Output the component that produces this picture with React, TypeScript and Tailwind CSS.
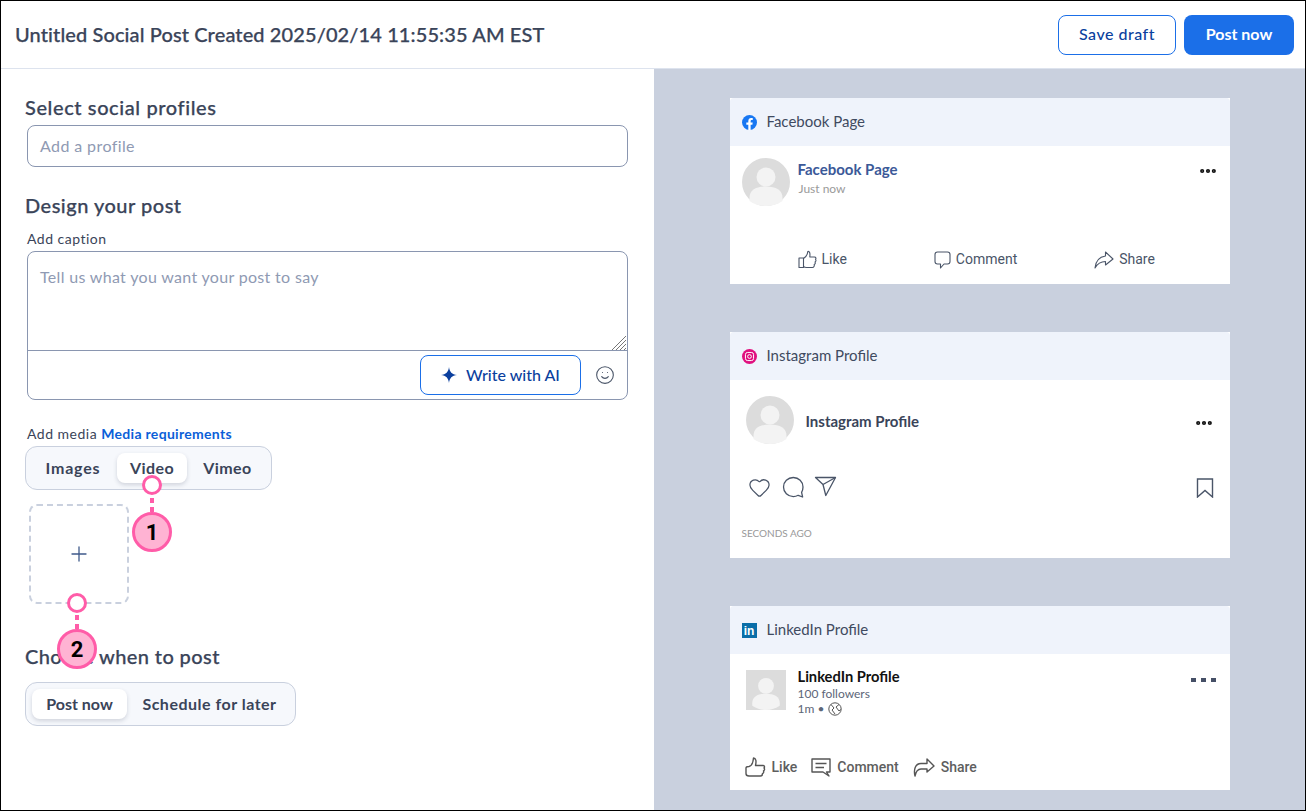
import React from 'react';
import { Smile, Plus, Ellipsis, Heart } from 'lucide-react';

const font = { fontFamily: 'Lato, "Open Sans", sans-serif' };

const Avatar: React.FC<{ square?: boolean; size: number }> = ({ square, size }) => (
  <svg width={size} height={size} viewBox="0 0 48 48" className="shrink-0">
    {square ? <rect width="48" height="48" fill="#dcdcdc" /> : <circle cx="24" cy="24" r="24" fill="#dcdcdc" />}
    <g fill="#f3f3f3">
      <circle cx="24" cy="19" r="9.5" />
      <path d="M7.5 43 V40 C7.5 32 14 28.5 24 28.5 C34 28.5 40.5 32 40.5 40 V43 C36 46.2 30 48 24 48 C18 48 12 46.2 7.5 43Z" />
    </g>
  </svg>
);

const CardHeader: React.FC<{ icon: React.ReactNode; label: string }> = ({ icon, label }) => (
  <div className="flex h-12 items-center gap-[10px] rounded-t-[4px] bg-[#eff3fb] px-3 text-[15px] text-[#3f4a60]">
    {icon}
    <span className="pb-[2px]">{label}</span>
  </div>
);

const FacebookIcon = () => (
  <svg width="15" height="15" viewBox="0 0 24 24">
    <circle cx="12" cy="12" r="12" fill="#1877f2" />
    <path fill="#fff" d="M16.6 15.4l.5-3.4h-3.3V9.8c0-.9.5-1.8 1.9-1.8h1.5V5.1s-1.4-.2-2.6-.2c-2.7 0-4.5 1.6-4.5 4.6V12H6.9v3.4h3.2V24h3.7v-8.6z" />
  </svg>
);

const InstagramIcon = () => (
  <svg width="15" height="15" viewBox="0 0 24 24">
    <circle cx="12" cy="12" r="12" fill="#e0107f" />
    <rect x="5.5" y="5.5" width="13" height="13" rx="3.5" fill="none" stroke="#fff" strokeWidth="1.6" />
    <circle cx="12" cy="12" r="3" fill="none" stroke="#fff" strokeWidth="1.6" />
  </svg>
);

const LinkedinIcon = () => (
  <div className="flex h-[15px] w-[15px] items-end justify-center bg-[#0a6ea8] text-[12px] font-bold leading-[14px] text-white" style={{ fontFamily: '"Liberation Sans", sans-serif' }}>
    in
  </div>
);

const FbLike = () => (
  <svg width="19" height="19" viewBox="0 0 19 19" fill="none" stroke="#4a5568" strokeWidth="1.1" strokeLinejoin="round">
    <rect x="1" y="8" width="4.5" height="9.5" />
    <path d="M5.5 8.5 C8 7 9.5 4.5 9.8 1.5 C11.5 1 12.3 3 11.8 7 H16.5 C18 7 18.3 8.5 17.5 9.3 C18.3 10.5 18 11.5 17 12 C17.6 13 17.2 14.2 16.2 14.6 C16.6 16 15.8 17.5 14.5 17.5 H8.5 C7 17.5 6 17 5.5 16.5" />
  </svg>
);

const FbComment = () => (
  <svg width="17" height="18" viewBox="0 0 17 18" fill="none" stroke="#4a5568" strokeWidth="1.1" strokeLinejoin="round">
    <path d="M3.5 1 H13.5 C15 1 16 2 16 3.5 V10.5 C16 12 15 13 13.5 13 H10 L6.5 17 V13 H3.5 C2 13 1 12 1 10.5 V3.5 C1 2 2 1 3.5 1Z" />
  </svg>
);

const FbShare = () => (
  <svg width="20" height="18" viewBox="0 0 20 18" fill="none" stroke="#4a5568" strokeWidth="1.1" strokeLinejoin="round">
    <path d="M11.5 1 L19 8 L11.5 14 V10.5 C7 10.5 3.5 12.5 1 17 C1.5 11 5 6 11.5 5Z" />
  </svg>
);

const FbAction: React.FC<{ icon: React.ReactNode; label: string; className: string }> = ({ icon, label, className }) => (
  <div className={`flex items-center gap-[5px] text-[14px] text-[#4a5568] ${className}`} style={{ fontFamily: 'Roboto, sans-serif' }}>
    {icon}
    <span>{label}</span>
  </div>
);

const IgComment = () => (
  <svg width="23" height="23" viewBox="0 0 23 23" fill="none" stroke="#4a5568" strokeWidth="1.3" strokeLinejoin="round">
    <path d="M11.3 1.5 C5.8 1.5 1.5 5.8 1.5 11 C1.5 16.4 5.8 20.6 11.3 20.6 C13.2 20.6 14.8 20.1 16.2 19.3 L20.6 21 L19.6 16.4 C20.5 14.8 21 13 21 11 C21 5.8 16.7 1.5 11.3 1.5Z" />
  </svg>
);

const IgSend = () => (
  <svg width="23" height="21" viewBox="0 0 23 21" fill="none" stroke="#4a5568" strokeWidth="1.3" strokeLinejoin="round">
    <path d="M1.5 1.5 H21.5 L11.8 19.5 L9 8.5Z" />
    <path d="M9 8.5 L21.5 1.5" />
  </svg>
);

const IgBookmark = () => (
  <svg width="18" height="20" viewBox="0 0 18 20" fill="none" stroke="#4a5568" strokeWidth="1.4" strokeLinejoin="miter">
    <path d="M1.5 1 H16.5 V19 L9 12.5 L1.5 19Z" />
  </svg>
);

const LiLike = () => (
  <svg width="21" height="21" viewBox="0 0 21 21" fill="none" stroke="#555" strokeWidth="1.4" strokeLinejoin="round">
    <path d="M1 11 C1 10 2 9.5 4 9.5 C6.5 9 8 6.5 8.5 1 C11 1 11.5 4 10.5 8.5 H18 C19.5 8.5 20 10 19 11 C20 12 19.5 13.5 18.5 14 C19 15 18.5 16.5 17.5 16.5 C17.5 18 17 19 15.5 19 H4 C2 19 1 18 1 16.5Z" />
  </svg>
);

const LiComment = () => (
  <svg width="20" height="19" viewBox="0 0 20 19" fill="none" stroke="#555" strokeWidth="1.4">
    <path d="M1 1 H19 V14 H15.5 L18 18 L12 14 H1Z" strokeLinejoin="round" />
    <path d="M4.5 5.5 H15.5 M4.5 9.5 H13" />
  </svg>
);

const LiShare = () => (
  <svg width="22" height="19" viewBox="0 0 22 19" fill="none" stroke="#555" strokeWidth="1.4" strokeLinejoin="round">
    <path d="M14 1 L21 8 L14 14 V11 H8 C5 11 3 13 2 18 C0.5 12 2 5.5 8 5.5 H14Z" />
  </svg>
);

const LiAction: React.FC<{ icon: React.ReactNode; label: string }> = ({ icon, label }) => (
  <div className="flex items-center gap-[6px] text-[14px] font-medium text-[#5e5e5e]" style={{ fontFamily: 'Roboto, sans-serif' }}>
    {icon}
    <span>{label}</span>
  </div>
);

// numbered marker laid over the page, with a dotted stem down from the ring
const Callout: React.FC<{ n: number; className: string; stem: string }> = ({ n, className, stem }) => (
  <div className={`absolute flex w-10 flex-col items-center ${className}`}>
    <div className="h-5 w-5 rounded-full border-[3px] border-[#ff5ca8] bg-white" />
    <div className={`w-1 bg-[repeating-linear-gradient(to_top,#ff5ca8_0,#ff5ca8_5px,transparent_5px,transparent_9px)] ${stem}`} />
    <div className="flex h-10 w-10 items-center justify-center rounded-full border-[3px] border-[#ff5ca8] bg-[#ffb3d3] text-[22px] font-bold text-black" style={{ fontFamily: 'Roboto, sans-serif' }}>
      {n}
    </div>
  </div>
);

export default function App() {
  return (
    <div className="relative flex h-[811px] w-[1306px] flex-col overflow-hidden border border-black bg-white text-[#3a4459]" style={font}>
      <header className="flex h-[68px] shrink-0 items-center justify-between border-b border-[#dde3ee] pl-[14px] pr-[11px]">
        <h1 className="pb-[2px] text-[20px] font-medium tracking-[0.11px] text-[#3a4459] [-webkit-text-stroke:0.25px]">Untitled Social Post Created 2025/02/14 11:55:35 AM EST</h1>
        <div className="flex gap-2">
          <button className="h-10 w-[118px] rounded-lg border border-[#1b6fe8] bg-white pb-[2px] text-[16px] font-medium tracking-[0.5px] text-[#0b3f9e]">Save draft</button>
          <button className="h-10 w-[110px] rounded-lg bg-[#1b6fe8] pb-[2px] text-[16px] font-bold text-white">Post now</button>
        </div>
      </header>

      <div className="flex min-h-0 flex-1">
        <main className="w-[653px] shrink-0 pl-[24px] pt-[27px]">
          <h2 className="text-[20px] font-medium leading-[22px] tracking-[0.6px] [-webkit-text-stroke:0.25px]">Select social profiles</h2>
          <div className="ml-[2px] mt-[7px] flex h-[42px] w-[601px] items-center rounded-lg border border-[#8a96b0] pl-3 text-[16px] tracking-[0.4px] text-[#8f9ab3]">Add a profile</div>

          <h2 className="mt-[27px] text-[20px] font-medium leading-[22px] tracking-[0.5px] [-webkit-text-stroke:0.25px]">Design your post</h2>
          <div className="ml-[2px] mt-[14px] text-[14px] leading-[18px] tracking-[0.5px]">Add caption</div>
          <div className="relative ml-[2px] mt-[3px] h-[149px] w-[601px] rounded-lg border border-[#8a96b0]">
            <div className="h-[99px] border-b border-[#8a96b0] pl-3 pt-[14px] text-[16px] leading-[22px] tracking-[0.32px] text-[#8f9ab3]">Tell us what you want your post to say</div>
            <svg width="16" height="15" viewBox="0 0 16 15" className="absolute right-0 top-[83px]" stroke="#777" strokeWidth="1">
              <path d="M1 15 L15 1 M5 15 L15 5 M9 15 L15 9 M13 15 L15 13" />
            </svg>
            <div className="flex h-[49px] items-center justify-end gap-[14px] pb-[2px] pr-[12px]">
              <button className="flex h-10 w-[161px] items-center justify-center gap-[9px] rounded-lg border border-[#1b6fe8] text-[16px] font-medium text-[#0b3f9e]">
                <svg width="16" height="16" viewBox="0 0 16 16" fill="#0b3f9e">
                  <path d="M8 0 C8.6 5 11 7.4 16 8 C11 8.6 8.6 11 8 16 C7.4 11 5 8.6 0 8 C5 7.4 7.4 5 8 0Z" />
                </svg>
                Write with AI
              </button>
              <Smile size={20} strokeWidth={1.3} className="text-[#4a5568]" />
            </div>
          </div>

          <div className="ml-[2px] mt-[25px] text-[14px] leading-[18px] tracking-[0.5px]">
            Add media <a className="font-bold tracking-[0.3px] text-[#0b5fd8]">Media requirements</a>
          </div>
          <div className="mt-[3px] flex h-11 w-[247px] items-center rounded-xl border border-[#c9d0de] bg-[#f6f8fc] pl-[6px] text-[16px] font-bold tracking-[0.4px]">
            <div className="flex h-[30px] w-[85px] items-center justify-center pr-[3px] tracking-[0.8px]">Images</div>
            <div className="flex h-[30px] w-[70px] items-center justify-center rounded-lg bg-white shadow-[0_2px_4px_rgba(40,50,80,0.18)]">Video</div>
            <div className="flex h-[30px] w-[81px] items-center justify-center">Vimeo</div>
          </div>
          <div className="ml-[4px] mt-[14px] flex h-[100px] w-[100px] items-center justify-center rounded-lg border-2 border-dashed border-[#c9d0de]">
            <Plus size={24} strokeWidth={1.3} className="text-[#3f5a8a]" />
          </div>

          <h2 className="mt-[41px] text-[20px] font-medium leading-[22px] tracking-[0.4px] [-webkit-text-stroke:0.25px]">Choose when to post</h2>
          <div className="mt-[15px] flex h-11 w-[271px] items-center rounded-xl border border-[#c9d0de] bg-[#f6f8fc] pl-[6px] text-[16px] font-bold">
            <div className="flex h-[30px] w-[95px] items-center justify-center rounded-lg bg-white shadow-[0_2px_4px_rgba(40,50,80,0.18)]">Post now</div>
            <div className="flex h-[30px] w-[165px] items-center justify-center tracking-[0.5px]">Schedule for later</div>
          </div>
        </main>

        <aside className="flex flex-1 flex-col items-center gap-12 bg-[#c9d0de] pt-[29px]">
          <section className="h-[186px] w-[500px] shrink-0 bg-white">
            <CardHeader icon={<FacebookIcon />} label="Facebook Page" />
            <div className="flex pl-3 pr-[12px] pt-3">
              <Avatar size={48} />
              <div className="ml-[8px] mt-[1px] flex-1">
                <div className="text-[15px] font-bold leading-5 text-[#3b5998]">Facebook Page</div>
                <div className="mt-[1px] pl-px text-[12px] leading-[18px] text-[#9a9a9a]">Just now</div>
              </div>
              <Ellipsis size={20} strokeWidth={3} className="mt-[3px] text-[#111]" />
            </div>
            <div className="mt-[43px] flex items-start">
              <FbAction icon={<FbLike />} label="Like" className="ml-[68px]" />
              <FbAction icon={<FbComment />} label="Comment" className="ml-[87px]" />
              <FbAction icon={<FbShare />} label="Share" className="ml-[77px]" />
            </div>
          </section>

          <section className="h-[226px] w-[500px] shrink-0 bg-white">
            <CardHeader icon={<InstagramIcon />} label="Instagram Profile" />
            <div className="flex items-center pl-4 pr-[16px] pt-4">
              <Avatar size={48} />
              <div className="ml-3 mt-[3px] flex-1 text-[15px] font-bold">Instagram Profile</div>
              <Ellipsis size={20} strokeWidth={3} className="mt-[5px] text-[#111]" />
            </div>
            <div className="mt-[32px] flex items-start pl-[18px] pr-[16px] text-[#4a5568]">
              <Heart size={23} strokeWidth={1.3} />
              <div className="ml-[11px]"><IgComment /></div>
              <div className="ml-[9px]"><IgSend /></div>
              <div className="ml-auto mt-[2px]"><IgBookmark /></div>
            </div>
            <div className="mt-[28px] pl-3 text-[10px] leading-3 text-[#999]">SECONDS AGO</div>
          </section>

          <section className="h-[184px] w-[500px] shrink-0 bg-white">
            <CardHeader icon={<LinkedinIcon />} label="LinkedIn Profile" />
            <div className="flex pl-4 pr-[14px] pt-4">
              <Avatar square size={40} />
              <div className="ml-3 flex-1 text-[12px] leading-4 text-[#5c6678]">
                <div className="-mt-px text-[14.7px] font-bold leading-[14px] text-[#111]">LinkedIn Profile</div>
                <div className="mt-[3px] leading-[15px]">100 followers</div>
                <div className="flex items-center gap-1 leading-[15px]">
                  1m •
                  <svg width="14" height="14" viewBox="0 0 14 14" fill="none" stroke="#555" strokeWidth="1">
                    <circle cx="7" cy="7" r="6.2" />
                    <path d="M3 2.5 L6 6 L4 8 L7 12 M11 2.5 L8 5 L11 9 L12.8 7.5" />
                  </svg>
                </div>
              </div>
              <div className="mt-[8px] flex gap-[5px]">
                <span className="h-1 w-[5px] bg-[#454f66]" />
                <span className="h-1 w-[5px] bg-[#454f66]" />
                <span className="h-1 w-[5px] bg-[#454f66]" />
              </div>
            </div>
            <div className="mt-[41px] flex items-center gap-[14px] pl-[15px]">
              <LiAction icon={<LiLike />} label="Like" />
              <LiAction icon={<LiComment />} label="Comment" />
              <LiAction icon={<LiShare />} label="Share" />
            </div>
          </section>
        </aside>
      </div>

      <Callout n={1} className="left-[131px] top-[474px]" stem="h-[17px]" />
      <Callout n={2} className="left-[56px] top-[592px]" stem="h-[16px]" />
    </div>
  );
}
